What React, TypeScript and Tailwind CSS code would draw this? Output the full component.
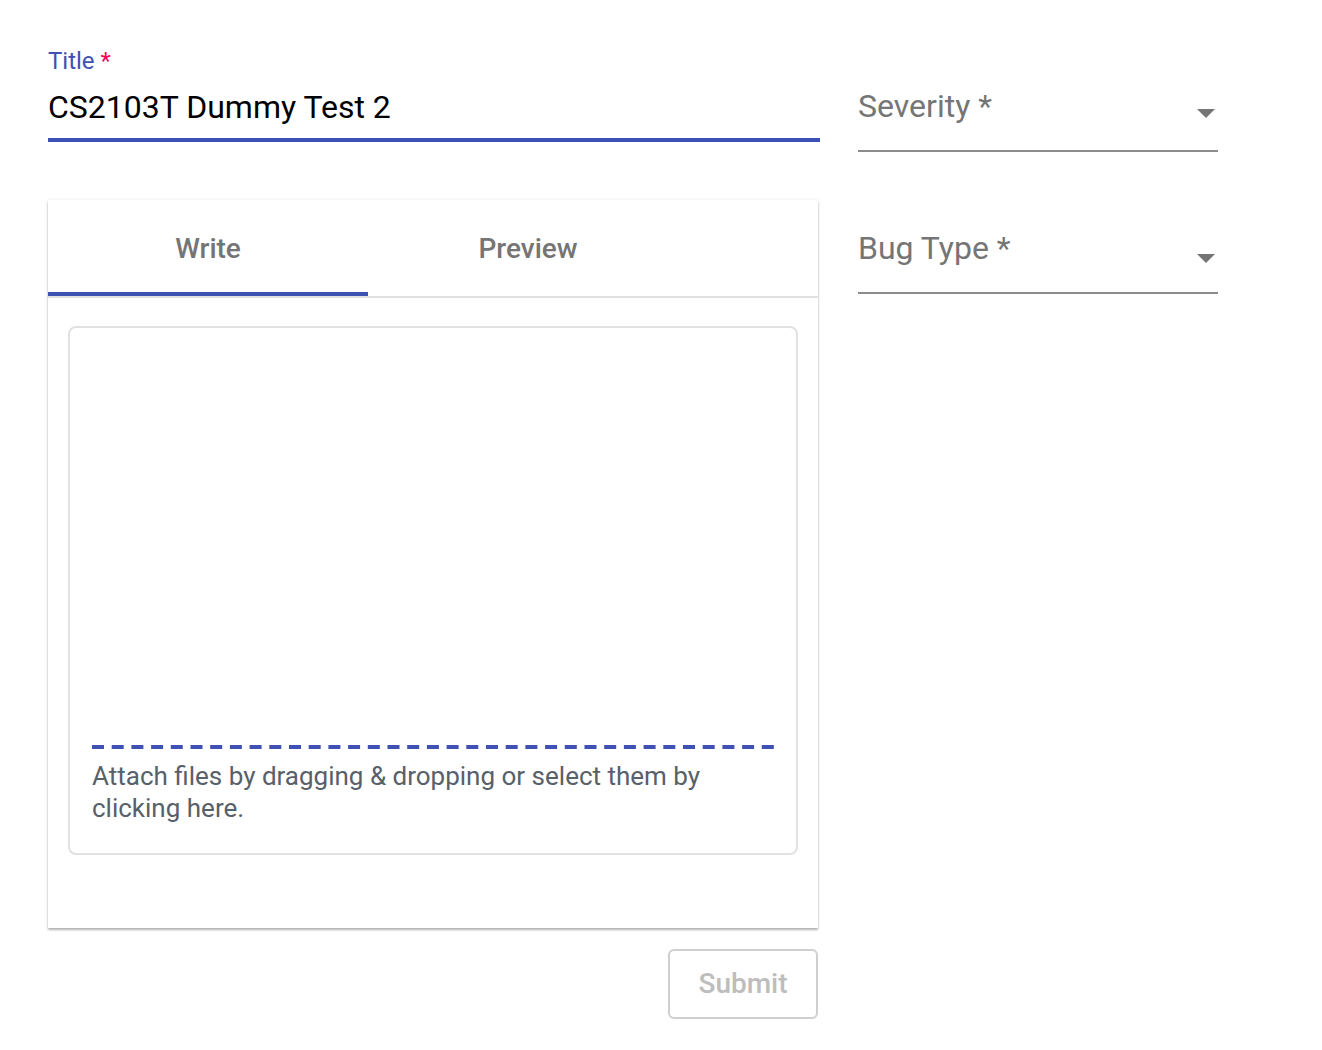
import React from "react";

// Dropdown caret used by the select fields
function Caret() {
  return (
    <svg width="18" height="9" viewBox="0 0 18 9" className="shrink-0">
      <path d="M0 0 L18 0 L9 9 Z" fill="#757575" />
    </svg>
  );
}

function SelectField({ label, caretClass }: { label: string; caretClass: string }) {
  return (
    <div className="flex h-[72px] items-start justify-between border-b-2 border-[#8c8c8c] pt-[8px]">
      <span className="text-[32px] leading-[36px] text-[#757575]">{label}</span>
      <span className={`mr-[3px] ${caretClass}`}>
        <Caret />
      </span>
    </div>
  );
}

export default function App() {
  return (
    <div
      className="min-h-screen bg-white px-[48px] pt-[44px]"
      style={{ fontFamily: "Roboto, 'Liberation Sans', sans-serif" }}
    >
      <div className="flex gap-[38px]">
        {/* Left column */}
        <div className="w-[772px]">
          {/* Title field */}
          <div className="border-b-4 border-[#3f51b5] pb-[12px]">
            <div className="mt-[2px] text-[24px] leading-[30px] text-[#3f51b5]">
              Title <span className="text-[#f50057]">*</span>
            </div>
            <div className="mt-[12px] text-[32px] leading-[38px] text-black">CS2103T Dummy Test 2</div>
          </div>

          {/* Editor card */}
          <div className="mt-[58px] mr-[2px] bg-white shadow-[0_2px_2px_rgba(0,0,0,0.28),0_0_4px_rgba(0,0,0,0.08)]">
            <div className="flex border-b-2 border-[#e0e0e0]">
              <div className="flex h-[96px] w-[320px] flex-col">
                <div className="flex flex-1 items-center justify-center pt-[6px] text-[28px] font-medium text-[#757575]">
                  Write
                </div>
                <div className="h-[4px] bg-[#3f51b5]" />
              </div>
              <div className="flex h-[96px] w-[320px] items-center justify-center pb-[4px] pt-[6px] text-[28px] font-medium text-[#757575]">
                Preview
              </div>
            </div>

            <div className="px-[20px] pb-[73px] pt-[28px]">
              <div className="flex h-[529px] flex-col justify-end rounded-[8px] border-2 border-[#e1e1e1] px-[22px] pb-[29px]">
                <svg height="4" className="w-full" preserveAspectRatio="none">
                  <line x1="0" y1="2" x2="100%" y2="2" stroke="#3f51b5" strokeWidth="4" strokeDasharray="12 7.7" />
                </svg>
                <p className="mt-[11px] text-[26px] leading-[32px] text-[#586069]">
                  Attach files by dragging &amp; dropping or select them by clicking here.
                </p>
              </div>
            </div>
          </div>

          <div className="mt-[21px] flex justify-end pr-[2px]">
            <button className="h-[70px] w-[150px] rounded-[6px] border-2 border-[#cfcfcf] text-[28px] font-medium text-[#bdbdbd]">
              Submit
            </button>
          </div>
        </div>

        {/* Right column */}
        <div className="w-[360px] pt-[36px]">
          <SelectField label="Severity *" caretClass="mt-[21px]" />
          <div className="mt-[70px]">
            <SelectField label="Bug Type *" caretClass="mt-[24px]" />
          </div>
        </div>
      </div>
    </div>
  );
}
